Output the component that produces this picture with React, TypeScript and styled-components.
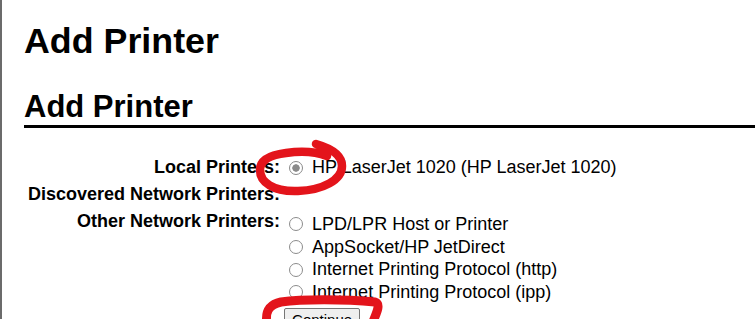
import styled, { createGlobalStyle } from "styled-components";

const GlobalStyle = createGlobalStyle`
  html, body {
    margin: 0;
    padding: 0;
    background: #ffffff;
  }
  body {
    font-family: "Liberation Sans", Arial, sans-serif;
    color: #000000;
    overflow: hidden;
  }
`;

const Page = styled.div`
  position: relative;
  height: 319px;
  border-left: 2px solid #6b6b6b;
  padding-left: 22px;
  box-sizing: border-box;
  overflow: hidden;
`;

const Title = styled.h1`
  margin: 21px 0 0;
  font-size: 35.8px;
  line-height: 40px;
  font-weight: bold;
`;

const Section = styled.h2`
  margin: 29px -40px 0 0;
  padding-bottom: 1px;
  font-size: 31px;
  line-height: 34px;
  font-weight: bold;
  border-bottom: 3px solid #000000;
`;

const Form = styled.table`
  margin-top: 26px;
  border-collapse: collapse;
  font-size: 18px;
`;

const Label = styled.th`
  text-align: right;
  vertical-align: top;
  font-weight: bold;
  white-space: nowrap;
  line-height: 23px;
  padding: 2px 2px 2px 4px;
`;

const Cell = styled.td<{ $drop?: number }>`
  vertical-align: top;
  padding: ${(p) => 2 + (p.$drop ?? 0)}px 2px 2px 2px;
  white-space: nowrap;
`;

const Option = styled.label<{ $pitch?: number }>`
  display: flex;
  align-items: center;
  height: ${(p) => p.$pitch ?? 23}px;
`;

const Radio = styled.input.attrs({ type: "radio" })`
  appearance: none;
  width: 14px;
  height: 14px;
  margin: 0 9px 0 5px;
  border: 1px solid #8c8c8c;
  border-radius: 50%;
  box-sizing: border-box;
  background: #ffffff;
  flex: none;

  &:checked {
    border-color: #8a8a8a;
    background: radial-gradient(circle, #8a8a8a 0 3.4px, #ffffff 4px);
  }
`;

const Button = styled.button`
  font-family: "Liberation Sans", Arial, sans-serif;
  font-size: 15px;
  height: 24px;
  padding: 1px 7px;
  border: 1px solid #767676;
  border-radius: 2px;
  background: #efefef;
  color: #000000;
`;

const Ink = styled.svg`
  position: absolute;
  left: 0;
  top: 0;
  pointer-events: none;
`;

const networkOptions = [
  "LPD/LPR Host or Printer",
  "AppSocket/HP JetDirect",
  "Internet Printing Protocol (http)",
  "Internet Printing Protocol (ipp)",
];

export default function App() {
  return (
    <>
      <GlobalStyle />
      <Page>
        <Title>Add Printer</Title>
        <Section>Add Printer</Section>
        <Form>
          <tbody>
            <tr>
              <Label>Local Printers:</Label>
              <Cell>
                <Option>
                  <Radio name="device" defaultChecked />
                  HP LaserJet 1020 (HP LaserJet 1020)
                </Option>
              </Cell>
            </tr>
            <tr>
              <Label>Discovered Network Printers:</Label>
              <Cell />
            </tr>
            <tr>
              <Label>Other Network Printers:</Label>
              <Cell $drop={3}>
                {networkOptions.map((o) => (
                  <Option key={o} $pitch={22.7}>
                    <Radio name="device" />
                    {o}
                  </Option>
                ))}
              </Cell>
            </tr>
            <tr>
              <Label />
              <Cell>
                <Button type="button">Continue</Button>
              </Cell>
            </tr>
          </tbody>
        </Form>
        <Ink width="755" height="319" viewBox="0 0 755 319">
          <path
            d="M 314 144 C 328 148, 340 155, 340 166 C 340 180, 321 190, 296 191 C 271 192, 258 182, 258 170 C 258 160, 268 155, 284 153 C 298 151, 312 151, 325 156"
            fill="none"
            stroke="#e3141b"
            strokeWidth="8.5"
            strokeLinecap="round"
            strokeLinejoin="round"
          />
          <path
            d="M 265 324 C 263 312, 266 305, 279 302 C 300 299, 342 299, 373 302 C 379 304, 375 312, 370 324"
            fill="none"
            stroke="#e3141b"
            strokeWidth="9"
            strokeLinecap="round"
            strokeLinejoin="round"
          />
        </Ink>
      </Page>
    </>
  );
}
